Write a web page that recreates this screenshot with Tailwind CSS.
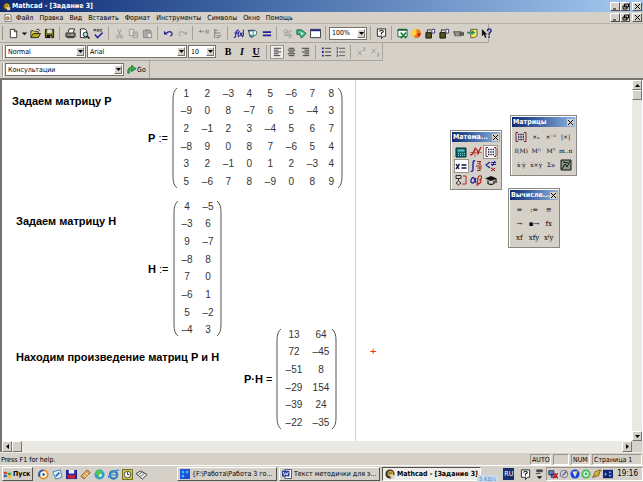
<!DOCTYPE html>
<html lang="ru">
<head>
    <meta charset="UTF-8">
    <meta name="viewport" content="width=device-width, initial-scale=1.0">
    <title>Mathcad - [Задание 3]</title>
    <script src="https://cdn.jsdelivr.net/npm/@tailwindcss/browser@4"></script>
</head>
<body class="bg-[#d5d0c8] text-black text-[7px] leading-[10px] font-['DejaVu_Sans_Condensed','Liberation_Sans',sans-serif]">
    <!-- Icons -->
    <svg class="hidden">
        <symbol id="new" viewBox="0 0 12 12"><path d="M2.5 1.5h5l2 2v7h-7z" fill="#fff" stroke="#333"/><path d="M7 1.5v2.5h3" fill="none" stroke="#333"/></symbol>
        <symbol id="down" viewBox="0 0 12 12"><path d="M3 5h6l-3 3z" fill="#111"/></symbol>
        <symbol id="open" viewBox="0 0 12 12"><path d="M1 10V3h3l1 1h4v2" fill="#e8d848" stroke="#333"/><path d="M1 10.5l2.5-4.5h8L9 10.5z" fill="#b8a818" stroke="#222"/><path d="M7 2q2-2 4 1" fill="none" stroke="#222"/></symbol>
        <symbol id="save" viewBox="0 0 12 12"><path d="M1.5 1.5h9v9h-9z" fill="#77771c" stroke="#111"/><path d="M3.5 1.5h5v4h-5z" fill="#ddd"/><path d="M3 7.5h6v3H3z" fill="#111"/><path d="M7 8.5h1v2H7z" fill="#fff"/></symbol>
        <symbol id="print" viewBox="0 0 12 12"><path d="M3.5 5l1-4h6l-1.5 4" fill="#fff" stroke="#222"/><path d="M1 5.5h10v4H1z" fill="#888" stroke="#222"/><path d="M2 10.5h8" stroke="#222"/><path d="M7 7.5h2" stroke="#e8d848"/></symbol>
        <symbol id="preview" viewBox="0 0 12 12"><path d="M1.5 1h5l2 2v7.5h-7z" fill="#fff" stroke="#222"/><circle cx="7" cy="7" r="2.5" fill="#a8d8e0" stroke="#222"/><path d="M9 9l2.5 2.5" stroke="#111" stroke-width="1.5"/></symbol>
        <symbol id="spell" viewBox="0 0 12 12"><path d="M1 3.5v-2h2v2M1 2.5h2M4.5 1.5h2v2h-2zM10 1.5H8v2h2" fill="none" stroke="#333" stroke-width=".8"/><path d="M2 7l3 3.5L10.5 5" fill="none" stroke="#22229a" stroke-width="1.6"/></symbol>
        <symbol id="cut" viewBox="0 0 12 12"><g fill="none" stroke="#999"><path d="M4 1l3 7M8 1L5 8"/><circle cx="4" cy="9.5" r="1.5"/><circle cx="8" cy="9.5" r="1.5"/></g></symbol>
        <symbol id="copy" viewBox="0 0 12 12"><path d="M1.5 1.5h5v7h-5zM5.5 4.5h5v6h-5z" fill="#ddd" stroke="#999"/><path d="M7 6.5h3M7 8.5h3" stroke="#999"/></symbol>
        <symbol id="paste" viewBox="0 0 12 12"><path d="M1.5 2.5h8v8h-8z" fill="#aaa" stroke="#888"/><path d="M4 1.5h3v2H4z" fill="#888"/><path d="M5.5 5.5h5v5h-5z" fill="#ddd" stroke="#888"/></symbol>
        <symbol id="undo" viewBox="0 0 12 12"><path d="M1 3v4h4z" fill="#22229a"/><path d="M3 6q5-4 7 0q0 2-2 3" fill="none" stroke="#22229a" stroke-width="1.3"/></symbol>
        <symbol id="redo" viewBox="0 0 12 12"><path d="M11 3v4H7z" fill="#aaa"/><path d="M9 6Q4 2 2 6q0 2 2 3" fill="none" stroke="#aaa" stroke-width="1.3"/></symbol>
        <symbol id="across" viewBox="0 0 12 12"><path d="M1 4h3M5 4h2M3 2v3M9 2v4M11 2v4" stroke="#777"/></symbol>
        <symbol id="below" viewBox="0 0 12 12"><path d="M3 1v10M3 2.5h3M3 5.5h6M5 8.5h5M5 10.5h3" stroke="#777"/></symbol>
        <symbol id="fx" viewBox="0 0 12 12"><path d="M1 10q2 1 2-3t3-5M1.5 5.5h4M7 3q-2 3-1 7M11 2q2 4-1 8M7.5 5l2.5 4M10.5 5l-3.5 4" fill="none" stroke="#22229a" stroke-width="1.2"/></symbol>
        <symbol id="unit" viewBox="0 0 12 12"><path d="M1.5 2.5h7v5q-3 4-5 2z" fill="#5bb7b7" stroke="#225"/><path d="M8 2.5q4 1 2 5l-3 1" fill="#fff" stroke="#365"/><path d="M3 4h3v3H3z" fill="#fff"/></symbol>
        <symbol id="calc" viewBox="0 0 12 12"><path d="M2 4.5h9M2 8h9" stroke="#22229a" stroke-width="2"/></symbol>
        <symbol id="link" viewBox="0 0 12 12"><g fill="none" stroke="#999"><circle cx="4" cy="4" r="2"/><circle cx="6.5" cy="6" r="2"/><path d="M2 8h9M7 10h4M8 3h3"/></g></symbol>
        <symbol id="component" viewBox="0 0 12 12"><path d="M1 2l5 0 5 4-5 5-2-4-3 0z" fill="#44bd8a" stroke="#155c3b"/><path d="M5 4l3 2-2 2z" fill="#fff"/></symbol>
        <symbol id="window" viewBox="0 0 12 12"><path d="M.5 1.5h11v9H.5z" fill="#fff" stroke="#333"/><path d="M1 2.5h10" stroke="#22229a" stroke-width="2"/></symbol>
        <symbol id="help" viewBox="0 0 12 12"><path d="M1.5 1h9v8H8l-2 2.5V9H1.5z" fill="#fff" stroke="#222"/><path d="M4 4q0-1.5 2-1.5T8 4L6 5.5V6.5M6 7v1" fill="none" stroke="#222" stroke-width="1.2"/></symbol>
        <symbol id="excel" viewBox="0 0 12 12"><path d="M1 1.5h10v8H1z" fill="#fff" stroke="#175e3b"/><path d="M1 2h10" stroke="#175e3b" stroke-width="2"/><path d="M4 5l6 6M10 5l-6 6" stroke="#1a8742" stroke-width="1.8"/></symbol>
        <symbol id="ball" viewBox="0 0 12 12"><circle cx="6" cy="6" r="5" fill="#e87a1b"/><path d="M6 1a5 5 0 0 0-3 9l3-4z" fill="#ffd53a"/><path d="M7 6l4 0-3 4z" fill="#c31d1d"/></symbol>
        <symbol id="disk" viewBox="0 0 12 12"><path d="M1 5h6v6H1z" fill="#55501c" stroke="#111"/><path d="M2.5 5V2h4" fill="none" stroke="#333"/><path d="M7.5 1.5h3v4h-3z" fill="#fff" stroke="#336"/></symbol>
        <symbol id="camera" viewBox="0 0 12 12"><path d="M0 3.5h9l1 1.5 2-1v5l-2-1-1 1H2z" fill="#5a5a50"/><path d="M2 5.5h5M3 7.5h4" stroke="#ccc"/></symbol>
        <symbol id="note" viewBox="0 0 12 12"><path d="M4 1.5h7v7l-3 2H4z" fill="#f3eb5c" stroke="#654"/><path d="M0 4h5V2l4 3-4 3V6H0z" fill="#2a8a6a"/></symbol>
        <symbol id="whats" viewBox="0 0 12 12"><path d="M1 1v8l2-2 1.5 4 1.5-1-1.5-3H7z" fill="#111"/><path d="M7 3.5Q7 1 9 1t2 2.5L9 6v2M9 9v2" fill="none" stroke="#22229a" stroke-width="1.5"/></symbol>
        <symbol id="left" viewBox="0 0 12 12"><path d="M2 2.5h8M2 4.5h5M2 6.5h8M2 8.5h5M2 10.5h7" stroke="#333"/></symbol>
        <symbol id="center" viewBox="0 0 12 12"><path d="M3 2.5h6M2 4.5h8M3 6.5h6M2 8.5h8M3 10.5h6" stroke="#333"/></symbol>
        <symbol id="right" viewBox="0 0 12 12"><path d="M2 2.5h8M5 4.5h5M2 6.5h8M5 8.5h5M3 10.5h7" stroke="#333"/></symbol>
        <symbol id="bullets" viewBox="0 0 12 12"><path d="M1 2.5h2M1 6.5h2M1 10.5h2" stroke="#22229a" stroke-width="2"/><path d="M4.5 2.5H11M4.5 6.5H11M4.5 10.5H11" stroke="#333"/></symbol>
        <symbol id="numbers" viewBox="0 0 12 12"><path d="M2.5 1v3M2.5 5v3M2.5 9v3" stroke="#22229a"/><path d="M4.5 2.5H11M4.5 6.5H11M4.5 10.5H11" stroke="#555"/></symbol>
        <symbol id="super" viewBox="0 0 12 12"><path d="M2 5l4 5M6 5l-4 5M8 2h2L8 5h2" fill="none" stroke="#999"/></symbol>
        <symbol id="sub" viewBox="0 0 12 12"><path d="M2 3l4 5M6 3L2 8M8 8h2l-2 3h2" fill="none" stroke="#999"/></symbol>
        <symbol id="go" viewBox="0 0 12 12"><path d="M1 11Q0 3 6 3V0l6 5-6 4V6Q3 6 3 11z" fill="#32b04a" stroke="#155c25" stroke-width=".8"/></symbol>
        <symbol id="logo" viewBox="0 0 12 12"><circle cx="6" cy="6" r="5.5" fill="#3d3222"/><circle cx="6.5" cy="5.5" r="3.5" fill="#e0a63a"/><path d="M4 4h4v2H4z" fill="#5a8a4a"/><path d="M6 7h5v4H7z" fill="#d8d2c0"/></symbol>
        <symbol id="doc" viewBox="0 0 12 12"><path d="M1.5.5h7l2 2v9h-9z" fill="#fff" stroke="#444"/><circle cx="5.5" cy="6.5" r="2.5" fill="#e0a63a" stroke="#643"/></symbol>

        <!-- Math palette -->
        <symbol id="m-calc" viewBox="0 0 12 12"><path d="M1 2h10v9H1z" fill="#0b6670" stroke="#012c38"/><path d="M2.5 3.5h7v2h-7z" fill="#66c3b8"/><path d="M3 7.5h7M3 9.5h7" stroke="#8cc" stroke-dasharray="1 1"/></symbol>
        <symbol id="m-graph" viewBox="0 0 12 12"><path d="M0 6.5h12M5 1v10" stroke="#a44" stroke-width=".7"/><path d="M0 9q3 0 4-4t3-1 1 4 3-7" fill="none" stroke="#b11" stroke-width="1.2"/></symbol>
        <symbol id="m-matrix" viewBox="0 0 12 12"><path d="M3 1.5H1v9h2M9 1.5h2v9H9" fill="none" stroke="#722"/><path d="M3 3.5h6M3 6h6M3 8.5h6" stroke="#225" stroke-width="1.4" stroke-dasharray="1.4 .9"/></symbol>
        <symbol id="m-eval" viewBox="0 0 12 12"><path d="M1 4l3 5M4.5 4L1 9M6.5 5h5M6.5 8h5" stroke="#114" stroke-width="1.4"/></symbol>
        <symbol id="m-int" viewBox="0 0 12 12"><path d="M5 1Q3 0 3 4v5q0 3-2 2" fill="none" stroke="#22a" stroke-width="1.4"/><path d="M7 1.5h4M10 1v4M7.5 3.5h2M6 6h6M7.5 8h4M10 7v4M7 10.5h3" stroke="#922"/></symbol>
        <symbol id="m-bool" viewBox="0 0 12 12"><path d="M5 2L1 5l4 3M6 2.5h5M6 4.5h5M10 1L7 6" fill="none" stroke="#229" stroke-width="1.2"/><path d="M6 8l4 3M6 11l4-3" stroke="#911"/></symbol>
        <symbol id="m-prog" viewBox="0 0 12 12"><path d="M1 1.5h5v3H1zM3.5 5v2M1 9l2.5-2L6 9l-2.5 2z" fill="none" stroke="#333"/><path d="M8 2h3v8H7" fill="none" stroke="#b22"/></symbol>
        <symbol id="m-greek" viewBox="0 0 12 12"><path d="M6 4Q4 10 2 9T1.5 5t3 0 1.5 4" fill="none" stroke="#229" stroke-width="1.3"/><path d="M7 12l1-8q1-3 3-2t-1 4q2 1 0 3t-2 0" fill="none" stroke="#b22" stroke-width="1.2"/></symbol>
        <symbol id="m-sym" viewBox="0 0 12 12"><path d="M0 4.5L6 2l6 2.5L6 7z" fill="#111"/><path d="M3 6.5v3q3 2 6 0v-3M11 5v4" fill="none" stroke="#222" stroke-width="1.3"/></symbol>

        <!-- Matrix palette -->
        <symbol id="m-picture" viewBox="0 0 12 12"><path d="M1 1h10v10H1z" fill="#8a9a88" stroke="#111"/><path d="M2 10l3-5 2 3 3-6M3 3l5 1" fill="none" stroke="#111"/></symbol>

        <!-- Quick launch and tray -->
        <symbol id="flag" viewBox="0 0 12 12"><path d="M1 3q2-2 4 0v3q-2-2-4 0z" fill="#d9391c"/><path d="M6 3q3 2 5 0v3q-2 2-5 0z" fill="#3ca33c"/><path d="M1 7q2-2 4 0v3q-2-2-4 0z" fill="#2a55c8"/><path d="M6 7q3 2 5 0v3q-2 2-5 0z" fill="#e9c81d"/></symbol>
        <symbol id="q-player" viewBox="0 0 12 12"><circle cx="6" cy="6" r="5.5" fill="#e58a1c"/><path d="M6 .5A5.5 5.5 0 0 0 1 9l5-3z" fill="#2859b5"/><circle cx="6" cy="6" r="3.5" fill="#fff"/><path d="M5 4l3 2-3 2z" fill="#234"/></symbol>
        <symbol id="q-desk" viewBox="0 0 12 12"><path d="M1 3l8-2 2 8-7 2z" fill="#e7f1f8" stroke="#3c7eb8"/><path d="M4 8l4-4" stroke="#2c6cb0" stroke-width="2"/></symbol>
        <symbol id="q-save" viewBox="0 0 12 12"><path d="M0 1h12v10H0z" fill="#2424a0"/><path d="M3 1h6v4H3z" fill="#eee"/><path d="M2 6.5h8v4H2z" fill="#c02440"/></symbol>
        <symbol id="q-pencil" viewBox="0 0 12 12"><path d="M1 8l7-7 3 3-7 7z" fill="#e6a555" stroke="#8b4c1c"/><path d="M4 6l3 3M6 4l3 3" stroke="#fff"/></symbol>
        <symbol id="q-globe" viewBox="0 0 12 12"><circle cx="6" cy="6" r="5.5" fill="#2a9ed8"/><path d="M3 1l6 1-1 4-3 5-1-4-3-2z" fill="#54c452"/><circle cx="7" cy="7" r="1.5" fill="#fff"/></symbol>
        <symbol id="q-ie" viewBox="0 0 12 12"><circle cx="6" cy="6.5" r="4" fill="none" stroke="#2a74bd" stroke-width="2.3"/><path d="M3 6.5h7M0 10Q2 3 12 1" stroke="#3f8fd0" stroke-width="1.4" fill="none"/></symbol>
        <symbol id="q-clock" viewBox="0 0 12 12"><path d="M.5.5h11v11H.5z" fill="#c9c640" stroke="#66661a"/><circle cx="6" cy="6" r="3.5" fill="#fff" stroke="#444"/><path d="M6 3.5V6h2" fill="none" stroke="#222"/></symbol>
        <symbol id="q-book" viewBox="0 0 12 12"><path d="M0 5l5-3 7 4-5 5z" fill="#eee" stroke="#333"/><path d="M3 6l4-3M5 8l4-3" stroke="#555"/></symbol>
        <symbol id="far" viewBox="0 0 12 12"><path d="M0 0h12v12H0z" fill="#1b50d8"/><path d="M2 2h3v3H2zM7 2h3v3H7zM2 7h3v3H2z" fill="#4cb4f4"/></symbol>
        <symbol id="word" viewBox="0 0 12 12"><path d="M3.5.5h8v11h-8z" fill="#fff" stroke="#335"/><path d="M0 2h9v7H0z" fill="#22389e"/><path d="M1.5 3.5l1.5 4 1.5-3 1.5 3 1.5-4" fill="none" stroke="#fff"/></symbol>
        <symbol id="t-lang" viewBox="0 0 12 12"><path d="M3 1h6v2H3z M2 5h5" fill="#444" stroke="#444"/><path d="M3 8h6l-3 3z" fill="#111"/></symbol>
        <symbol id="t-net" viewBox="0 0 12 12"><path d="M1 2h6v5H1zM4 6h6v4H4z" fill="#5a86c8" stroke="#225"/><path d="M6 5l6 6M12 5l-6 6" stroke="#cf1f2c" stroke-width="1.8"/></symbol>
        <symbol id="t-vol" viewBox="0 0 12 12"><circle cx="6" cy="6" r="4.5" fill="#cfd4e4" stroke="#667"/><path d="M4 8l5-5" stroke="#556" stroke-width="1.5"/></symbol>
        <symbol id="t-blue" viewBox="0 0 12 12"><circle cx="6" cy="6" r="5.5" fill="#1746d8"/><path d="M3 3l6 0-3 7z" fill="#eef"/><path d="M6 3h3l-2 4z" fill="#e4c92c"/></symbol>
        <symbol id="t-green" viewBox="0 0 12 12"><circle cx="6" cy="6" r="5.5" fill="#48b860"/><circle cx="6" cy="6" r="2.5" fill="none" stroke="#e8fbe8" stroke-width="1.5"/></symbol>
        <symbol id="t-plug" viewBox="0 0 12 12"><path d="M1 10l3-7 6-2-2 7z" fill="#e8c33a" stroke="#765010"/><path d="M0 11L12 1" stroke="#876"/></symbol>
        <symbol id="t-screen" viewBox="0 0 12 12"><path d="M0 1h12v10H0z" fill="#15206e"/><path d="M2 4l3 2-3 3M7 3h3v2H7zM7 7h3v2H7z" fill="#58a4e8"/></symbol>
    </svg>

    <div class="flex h-screen flex-col overflow-hidden">
        <!-- Title bar -->
        <header class="flex h-[12px] shrink-0 items-center bg-linear-to-r from-[#0c2a74] to-[#a6caf0] pl-[2px] text-white">
            <svg class="size-[9px]"><use href="#logo"/></svg>
            <h1 class="ml-px flex-1 font-bold whitespace-nowrap">Mathcad - [Задание 3]</h1>
            <div class="flex pr-px" data-window-buttons></div>
        </header>

        <!-- Menu -->
        <nav class="flex h-[12px] shrink-0 items-center border-b border-[#b9b4ac] pl-[4px]">
            <svg class="mr-[4px] size-[8px]"><use href="#doc"/></svg>
            <div class="flex flex-1 gap-[6px] whitespace-nowrap">
                <a href="#">Файл</a>
                <a href="#">Правка</a>
                <a href="#">Вид</a>
                <a href="#">Вставить</a>
                <a href="#">Формат</a>
                <a href="#">Инструменты</a>
                <a href="#">Символы</a>
                <a href="#">Окно</a>
                <a href="#">Помощь</a>
            </div>
            <div class="flex pr-px" data-window-buttons></div>
        </nav>

        <!-- Standard toolbar -->
        <div class="flex h-[19px] w-[489px] shrink-0 items-center border-r border-b border-[#aaa59c] pl-[2px]">
            <div class="mr-[3px] h-[14px] w-[2px] border-l border-[#99948c] bg-white"></div>
            <div class="flex" data-tools="new down open save | print preview spell | cut copy paste | undo redo | across below | fx unit calc | link component window |"></div>
            <select aria-label="Масштаб" class="h-[13px] w-[38px] appearance-none rounded-none border border-[#77726a] bg-white pl-[2px]" data-combo><option>100%</option></select>
            <div class="flex" data-tools="| help | excel ball disk disk camera note whats"></div>
        </div>

        <!-- Formatting toolbar -->
        <div class="flex h-[18px] w-[383px] shrink-0 items-center border-r border-b border-[#aaa59c] pl-[2px]">
            <div class="mr-px h-[14px] w-[2px] border-l border-[#99948c] bg-white"></div>
            <select aria-label="Стиль" class="h-[13px] w-[81px] appearance-none rounded-none border border-[#77726a] bg-white pl-[2px]" data-combo><option>Normal</option></select>
            <select aria-label="Шрифт" class="ml-px h-[13px] w-[100px] appearance-none rounded-none border border-[#77726a] bg-white pl-[2px]" data-combo><option>Arial</option></select>
            <select aria-label="Размер" class="ml-px h-[13px] w-[28px] appearance-none rounded-none border border-[#77726a] bg-white pl-[2px]" data-combo><option>10</option></select>
            <div class="ml-[5px] flex font-['Liberation_Serif',serif] text-[10px] font-bold">
                <button class="w-[14px]">B</button>
                <button class="w-[14px] italic">I</button>
                <button class="w-[14px] underline">U</button>
            </div>
            <div class="flex" data-tools="| left center right | bullets numbers | super sub" data-pressed="left"></div>
        </div>

        <!-- Resources toolbar -->
        <div class="flex h-[17px] w-[150px] shrink-0 items-center border-r border-[#aaa59c] pl-[2px]">
            <div class="mr-px h-[14px] w-[2px] border-l border-[#99948c] bg-white"></div>
            <select aria-label="Ресурсы" class="h-[13px] w-[119px] appearance-none rounded-none border border-[#77726a] bg-white pl-[2px]" data-combo><option>Консультации</option></select>
            <button class="ml-[3px] flex items-center gap-px"><svg class="size-[9px]"><use href="#go"/></svg>Go</button>
        </div>

        <!-- Worksheet -->
        <main class="flex min-h-0 flex-1 border-t-2 border-l-2 border-[#77736e] bg-white">
            <div id="sheet" class="relative flex-1 overflow-hidden font-['Liberation_Sans',Arial,sans-serif] text-[10px] leading-[12px]">
                <div class="absolute inset-y-0 left-[353px] w-px bg-[#cfcfcf]"></div>

                <p class="absolute top-[15px] left-[10px] text-[11px] font-bold whitespace-nowrap">Задаем матрицу Р</p>
                <div class="absolute top-[5px] left-[146px] flex items-center" data-matrix="P" data-name="P" data-sign=":=" data-height="106"></div>

                <p class="absolute top-[135px] left-[14px] text-[11px] font-bold whitespace-nowrap">Задаем матрицу Н</p>
                <div class="absolute top-[118px] left-[146px] flex items-center" data-matrix="H" data-name="H" data-sign=":=" data-height="141"></div>

                <p class="absolute top-[271px] left-[14px] text-[11px] font-bold whitespace-nowrap">Находим произведение матриц Р и Н</p>
                <div class="absolute top-[246px] left-[242px] flex items-center" data-matrix="PH" data-name="P·H" data-sign="=" data-height="106"></div>

                <!-- Cursor -->
                <span class="absolute top-[265px] left-[368px] text-[11px] text-[#ff2020]">+</span>

                <!-- Palettes -->
                <section class="absolute top-[50px] left-[448px] w-[52px] border border-[#8a8680] bg-[#d5d0c8] pb-[2px] shadow-[inset_1px_1px_0_#fff]" data-palette="Матема..." data-pressed="m-matrix m-eval">
                    <div class="grid grid-cols-3 px-[3px] pt-[2px]" data-items="m-calc m-graph m-matrix m-eval m-int m-bool m-prog m-greek m-sym"></div>
                </section>
                <section class="absolute top-[35px] left-[508px] w-[67px] border border-[#8a8680] bg-[#d5d0c8] pb-[3px] shadow-[inset_1px_1px_0_#fff]" data-palette="Матрицы" data-pressed="">
                    <div class="grid grid-cols-4 px-[3px] pt-[2px] font-['DejaVu_Serif',serif] text-[6px]" data-items="m-matrix ×ₙ ×⁻¹ |×| f(M) M⁽⁾ Mᵀ m..n ẋ·ẏ ẋ×ẏ Συ m-picture"></div>
                </section>
                <section class="absolute top-[108px] left-[506px] w-[52px] border border-[#8a8680] bg-[#d5d0c8] pb-[2px] shadow-[inset_1px_1px_0_#fff]" data-palette="Вычисле..." data-pressed="">
                    <div class="grid grid-cols-3 px-[3px] pt-[2px] font-['DejaVu_Serif',serif] text-[7px]" data-items="= := ≡ → ▪→ fx xf xfy xᶠy"></div>
                </section>
            </div>
            <!-- Vertical scrollbar -->
            <div class="mr-px flex w-[10px] flex-col bg-[#ebe9e4]">
                <button aria-label="Вверх" class="flex h-[10px] items-center justify-center border border-t-white border-r-[#77736e] border-b-[#77736e] border-l-white bg-[#d5d0c8]"><svg class="size-[5px]" viewBox="0 0 5 5"><path d="M0 4h5L2.5 1z"/></svg></button>
                <div class="h-[10px] border border-t-white border-r-[#77736e] border-b-[#77736e] border-l-white bg-[#d5d0c8]"></div>
                <div class="flex-1"></div>
                <button aria-label="Вниз" class="flex h-[10px] items-center justify-center border border-t-white border-r-[#77736e] border-b-[#77736e] border-l-white bg-[#d5d0c8]"><svg class="size-[5px]" viewBox="0 0 5 5"><path d="M0 1h5L2.5 4z"/></svg></button>
            </div>
        </main>

        <!-- Horizontal scrollbar -->
        <div class="flex h-[11px] shrink-0 border-l-2 border-[#77736e] bg-[#ebe9e4] pr-px">
            <button aria-label="Влево" class="flex w-[10px] items-center justify-center border border-t-white border-r-[#77736e] border-b-[#77736e] border-l-white bg-[#d5d0c8]"><svg class="size-[5px]" viewBox="0 0 5 5"><path d="M4 0v5L1 2.5z"/></svg></button>
            <div class="w-[10px] border border-t-white border-r-[#77736e] border-b-[#77736e] border-l-white bg-[#d5d0c8]"></div>
            <div class="flex-1"></div>
            <button aria-label="Вправо" class="flex w-[10px] items-center justify-center border border-t-white border-r-[#77736e] border-b-[#77736e] border-l-white bg-[#d5d0c8]"><svg class="size-[5px]" viewBox="0 0 5 5"><path d="M1 0v5l3-2.5z"/></svg></button>
            <div class="w-[10px] bg-[#d5d0c8]"></div>
        </div>

        <!-- Status bar -->
        <footer class="flex h-[13px] shrink-0 items-end gap-[2px] border-t border-[#eeebe6] pr-px pl-px whitespace-nowrap">
            <span class="flex-1">Press F1 for help.</span>
            <span class="h-[11px] w-[21px] border border-t-[#99948c] border-r-white border-b-white border-l-[#99948c] px-px">AUTO</span>
            <span class="h-[11px] w-[16px] border border-t-[#99948c] border-r-white border-b-white border-l-[#99948c]"></span>
            <span class="h-[11px] w-[19px] border border-t-[#99948c] border-r-white border-b-white border-l-[#99948c] px-px">NUM</span>
            <span class="h-[11px] w-[50px] border border-t-[#99948c] border-r-white border-b-white border-l-[#99948c] px-px">Страница 1</span>
        </footer>

        <!-- Taskbar -->
        <div class="flex h-[17px] shrink-0 items-center border-t border-white pl-[2px] whitespace-nowrap">
            <button class="flex h-[14px] w-[31px] items-center gap-px border border-t-white border-r-[#55524e] border-b-[#55524e] border-l-white font-bold"><svg class="size-[9px] shrink-0"><use href="#flag"/></svg>Пуск</button>
            <div class="ml-[3px] flex" data-tools="q-player q-desk q-save q-pencil q-globe q-ie q-clock q-book"></div>
            <div class="ml-[29px] flex flex-1 gap-[2px]">
                <button class="flex h-[14px] w-[100px] items-center gap-[2px] border border-t-white border-r-[#55524e] border-b-[#55524e] border-l-white px-[2px]"><svg class="size-[10px] shrink-0"><use href="#far"/></svg><span class="truncate">{F:\Работа\Работа 3 го...</span></button>
                <button class="flex h-[14px] w-[101px] items-center gap-[2px] border border-t-white border-r-[#55524e] border-b-[#55524e] border-l-white px-[2px]"><svg class="size-[10px] shrink-0"><use href="#word"/></svg><span class="truncate">Текст методички для э...</span></button>
                <button class="flex h-[14px] w-[99px] items-center gap-[2px] border border-t-[#55524e] border-r-white border-b-white border-l-[#55524e] bg-[#efede9] px-[2px] font-bold"><svg class="size-[10px] shrink-0"><use href="#logo"/></svg>Mathcad - [Задание 3]</button>
            </div>
            <div class="relative flex items-center">
                <span class="absolute top-[8px] right-[145px] bg-[#c9dcec] px-[2px] text-[6px] leading-[7px] text-[#4a8fd0]">5 KB/s</span>
                <span class="mr-[4px] flex h-[12px] w-[11px] items-center justify-center bg-[#15306e] text-white">RU</span>
                <div class="flex" data-tools="help t-lang"></div>
                <div class="flex h-[14px] items-center gap-px border border-t-[#99948c] border-r-white border-b-white border-l-[#99948c] px-px">
                    <svg class="size-[10px]"><use href="#t-net"/></svg>
                    <svg class="size-[10px]"><use href="#t-vol"/></svg>
                    <svg class="size-[10px]"><use href="#t-blue"/></svg>
                    <svg class="size-[10px]"><use href="#t-green"/></svg>
                    <svg class="size-[10px]"><use href="#t-plug"/></svg>
                    <svg class="size-[10px]"><use href="#t-screen"/></svg>
                    <time class="px-[3px] text-[8px]">19:16</time>
                </div>
            </div>
        </div>
    </div>

    <script>
    const matrices = {
        P: [
            [1, 2, -3, 4, 5, -6, 7, 8],
            [-9, 0, 8, -7, 6, 5, -4, 3],
            [2, -1, 2, 3, -4, 5, 6, 7],
            [-8, 9, 0, 8, 7, -6, 5, 4],
            [3, 2, -1, 0, 1, 2, -3, 4],
            [5, -6, 7, 8, -9, 0, 8, 9]
        ],
        H: [[4, -5], [-3, 6], [9, -7], [-8, 8], [7, 0], [-6, 1], [5, -2], [-4, 3]],
        PH: [[13, 64], [72, -45], [-51, 8], [-29, 154], [-39, 24], [-22, -35]]
    };

    const cells = {
        P: 'w-[21px] p-0 text-center last:w-[17px]',
        H: 'w-[21px] p-0 text-center',
        PH: 'w-[27px] p-0 text-center'
    };

    // Toolbar buttons, "|" is a separator
    document.querySelectorAll('[data-tools]').forEach(bar => {
        bar.innerHTML = bar.dataset.tools.split(' ').map(name => {
            if (name === '|') {
                return '<div class="mx-[3px] h-[14px] w-px bg-[#a5a098]"></div>';
            }
            const pressed = name === bar.dataset.pressed ? 'bg-[#f0eeea] border border-[#99948c]' : '';
            const width = name === 'down' ? 'w-[8px]' : 'w-[14px]';
            return `<button aria-label="${name}" class="flex h-[14px] items-center justify-center ${width} ${pressed}"><svg class="size-[11px] shrink-0"><use href="#${name}"/></svg></button>`;
        }).join('');
    });

    // Drop-down arrows
    document.querySelectorAll('[data-combo]').forEach(select => {
        const box = document.createElement('div');
        box.className = 'relative flex';
        select.replaceWith(box);
        box.append(select);
        box.insertAdjacentHTML('beforeend', '<span class="pointer-events-none absolute inset-y-[2px] right-[2px] flex w-[8px] items-center justify-center border border-t-white border-r-[#77736e] border-b-[#77736e] border-l-white bg-[#d5d0c8]"><svg class="size-[5px]" viewBox="0 0 5 5"><path d="M0 1h5L2.5 4z"/></svg></span>');
    });

    // Minimize, restore, close
    document.querySelectorAll('[data-window-buttons]').forEach(box => {
        const shapes = ['M1 6h3', 'M2.5 1h4v3h-4zM1 3h4v3H1z', 'M1 1l5 5M6 1L1 6'];
        box.innerHTML = shapes.map((d, i) =>
            `<button aria-label="window ${i}" class="flex h-[9px] w-[10px] items-center justify-center border border-t-white border-r-[#55524e] border-b-[#55524e] border-l-white bg-[#d5d0c8] last:ml-[2px]"><svg class="size-[7px]" viewBox="0 0 7 7"><path d="${d}" fill="none" stroke="#000"/></svg></button>`
        ).join('');
    });

    // Matrices
    document.querySelectorAll('[data-matrix]').forEach(box => {
        const { matrix, name, sign, height } = box.dataset;
        const h = Number(height) - 4;
        const rows = matrices[matrix].map(row =>
            '<tr>' + row.map(n => `<td class="${cells[matrix]}">${String(n).replace('-', '–')}</td>`).join('') + '</tr>'
        ).join('');
        box.innerHTML = `
            <span class="mr-[4px] text-[11px] whitespace-nowrap"><b>${name}</b> ${sign}</span>
            <svg class="-mr-[2px]" width="6" height="${h}"><path d="M5 1Q1 4 1 12V${h - 12}Q1 ${h - 4} 5 ${h - 1}" fill="none" stroke="#555"/></svg>
            <table class="table-fixed text-[#333]" style="height:${height}px">${rows}</table>
            <svg class="-ml-[3px]" width="6" height="${h}"><path d="M1 1Q5 4 5 12V${h - 12}Q5 ${h - 4} 1 ${h - 1}" fill="none" stroke="#555"/></svg>`;
    });

    // Palettes
    document.querySelectorAll('[data-palette]').forEach(win => {
        const grid = win.querySelector('[data-items]');
        const pressed = win.dataset.pressed.split(' ');
        grid.innerHTML = grid.dataset.items.split(' ').map(item => {
            const look = pressed.includes(item) ? 'bg-white border border-[#99948c]' : '';
            const body = item.startsWith('m-') ? `<svg class="size-[12px] shrink-0"><use href="#${item}"/></svg>` : item;
            return `<button aria-label="${item}" class="flex h-[14px] items-center justify-center leading-[10px] whitespace-nowrap ${look}">${body}</button>`;
        }).join('');
        win.insertAdjacentHTML('afterbegin', `
            <div class="m-px flex h-[10px] items-center justify-between bg-linear-to-r from-[#0c2a74] to-[#8fb4e0] px-px font-['DejaVu_Sans_Condensed',sans-serif] text-[7px] leading-[10px] font-bold text-white">
                <h2 class="whitespace-nowrap">${win.dataset.palette}</h2>
                <button aria-label="close" class="flex size-[7px] shrink-0 items-center justify-center bg-[#d5d0c8]"><svg class="size-[5px]" viewBox="0 0 5 5"><path d="M0 0l5 5M5 0L0 5" stroke="#000"/></svg></button>
            </div>`);
    });
    </script>
</body>
</html>
